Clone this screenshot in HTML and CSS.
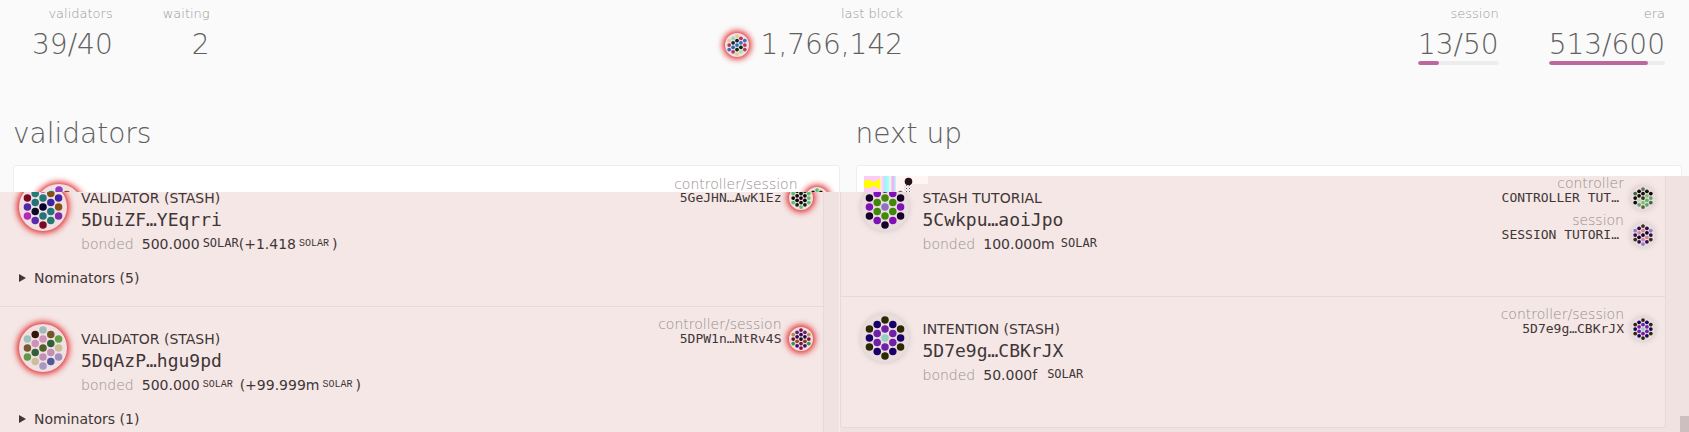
FILE: index.html
```html
<!DOCTYPE html>
<html lang="en">
<head>
<meta charset="utf-8">
<title>Staking overview</title>
<link rel="stylesheet" href="styles.css">
</head>
<body>
<header class="summary">
  <div class="group">
    <div class="stat"><span class="label">validators</span><span class="value">39/40</span></div>
    <div class="stat"><span class="label">waiting</span><span class="value">2</span></div>
  </div>
  <div class="stat">
    <span class="label">last block</span>
    <span class="value"><svg class="ident small hot" data-set="block"></svg>1,766,142</span>
  </div>
  <div class="group">
    <div class="stat"><span class="label">session</span><span class="value">13/50</span><div class="bar"><div class="fill" style="width:26%"></div></div></div>
    <div class="stat"><span class="label">era</span><span class="value">513/600</span><div class="bar"><div class="fill" style="width:85%"></div></div></div>
  </div>
</header>

<main>
  <div class="headings"><h1>validators</h1><h1>next up</h1></div>

  <div class="backdrop">
    <div class="card">
      <div class="row">
        <svg class="ident hot" data-set="dui"></svg>
        <div class="info"></div>
        <div class="keys"><div class="key"><div class="key-label">controller/session</div><svg class="ident small hot" data-set="ge"></svg></div></div>
      </div>
    </div>
    <div class="card"></div>
  </div>

  <div class="lists">
    <section class="column column-left">
      <div class="card">
        <article class="entry">
          <div class="row">
            <svg class="ident hot" data-set="dui"></svg>
            <div class="info">
              <div class="name">VALIDATOR (STASH)</div>
              <div class="address">5DuiZF…YEqrri</div>
              <div class="bonded"><span class="dim">bonded</span><span class="amount">500.000</span><span class="unit tight">SOLAR</span><span>(+1.418</span><span class="unit tiny">SOLAR</span><span>)</span></div>
            </div>
            <div class="keys"><div class="key"><div class="key-value">5GeJHN…AwK1Ez</div><svg class="ident small hot" data-set="ge"></svg></div></div>
          </div>
          <details><summary>Nominators (5)</summary></details>
        </article>
        <article class="entry">
          <div class="row">
            <svg class="ident hot" data-set="dqa"></svg>
            <div class="info">
              <div class="name">VALIDATOR (STASH)</div>
              <div class="address">5DqAzP…hgu9pd</div>
              <div class="bonded"><span class="dim">bonded</span><span class="amount">500.000</span><span class="unit tiny">SOLAR</span><span class="reward">(+99.999m</span><span class="unit tiny">SOLAR</span><span>)</span></div>
            </div>
            <div class="keys"><div class="key"><div class="key-label">controller/session</div><div class="key-value">5DPW1n…NtRv4S</div><svg class="ident small hot" data-set="dpw"></svg></div></div>
          </div>
          <details><summary>Nominators (1)</summary></details>
        </article>
      </div>
    </section>

    <section class="column column-right">
      <div class="card">
        <article class="entry">
          <div class="row">
            <svg class="ident" data-set="cwk"></svg>
            <div class="info">
              <div class="name">STASH TUTORIAL</div>
              <div class="address">5Cwkpu…aoiJpo</div>
              <div class="bonded"><span class="dim">bonded</span><span class="amount">100.000m</span><span class="unit">SOLAR</span></div>
            </div>
            <div class="keys">
              <div class="key"><div class="key-label">controller</div><div class="key-value short">CONTROLLER TUT…</div><svg class="ident small" data-set="ctl"></svg></div>
              <div class="key"><div class="key-label">session</div><div class="key-value short">SESSION TUTORI…</div><svg class="ident small" data-set="ses"></svg></div>
            </div>
          </div>
        </article>
        <article class="entry">
          <div class="row">
            <svg class="ident" data-set="d7e"></svg>
            <div class="info">
              <div class="name">INTENTION (STASH)</div>
              <div class="address">5D7e9g…CBKrJX</div>
              <div class="bonded"><span class="dim">bonded</span><span class="amount">50.000f</span><span class="unit wide">SOLAR</span></div>
            </div>
            <div class="keys"><div class="key"><div class="key-label">controller/session</div><div class="key-value">5D7e9g…CBKrJX</div><svg class="ident small" data-set="d7e"></svg></div></div>
          </div>
        </article>
      </div>
    </section>

    <svg class="noise" viewBox="0 0 64 16" aria-hidden="true">
      <defs>
        <linearGradient id="streaks"><stop offset="0" stop-color="#fff6c8"/><stop offset=".2" stop-color="#ffc8ff"/><stop offset=".3" stop-color="#9ff4f4"/><stop offset=".5" stop-color="#a0ffff"/><stop offset=".65" stop-color="#fff0d8"/><stop offset=".8" stop-color="#e8a8ff"/><stop offset="1" stop-color="#b8fff0"/></linearGradient>
        <pattern id="specks" width="3" height="3" patternUnits="userSpaceOnUse"><rect width="1" height="1" fill="#6a5a5a"/><rect x="1.500" y="1.500" width="1" height="1" fill="#a89898"/></pattern>
      </defs>
      <path fill="#fff5f5" d="M32 0h32v8H48v8H32z"/>
      <path fill="#fccbfa" d="M0 0h16v16H0z"/>
      <path fill="url(#streaks)" d="M16 0h16v16H16z"/>
      <path fill="#ff0" d="M0 5q5-3 9 1l7-3v10l-7-3q-4 4-9 1z"/>
      <circle cx="44.500" cy="5.500" r="3.800" fill="#26101a"/>
      <path fill="url(#specks)" d="M40 9h8v7h-8z"/>
      <path fill="#806a60" d="M34 16q2-3 5 0z"/>
    </svg>
  </div>
</main>
<div class="thumb"></div>
<script src="app.js"></script>
</body>
</html>
```
FILE: styles.css
```css
* { box-sizing: border-box; }
html, body { height: 100%; margin: 0; overflow: hidden; }
body {
  display: flex;
  flex-direction: column;
  background: #fafafa;
  color: #403636;
  font: 14px/20px "DejaVu Sans", sans-serif;
}
main { flex: 1; min-height: 0; overflow: hidden; }

.summary {
  display: flex;
  flex: none;
  justify-content: space-between;
  padding: 4px 24px 39px 32px;
}
.group { display: flex; gap: 50px; }
.stat { display: flex; flex-direction: column; align-items: flex-end; }
.label { color: #999; font-size: 13px; font-weight: 200; line-height: 20px; }
.value {
  display: flex;
  align-items: center;
  gap: 12px;
  padding-top: 4px;
  color: #606060;
  font-size: 28px;
  font-weight: 200;
  line-height: 33px;
}
.bar { width: 100%; height: 4px; border-radius: 2px; background: #ededed; overflow: hidden; }
.fill { height: 100%; border-radius: 2px; background: #bd679b; }

.headings, .backdrop {
  display: grid;
  grid-template-columns: 1fr 1fr;
  gap: 16px;
  padding: 0 7px 0 13px;
}
h1 {
  height: 61px;
  margin: 0;
  color: #606060;
  font-size: 28px;
  font-weight: 200;
  line-height: 60px;
}

.backdrop { height: 27px; overflow: hidden; }
.backdrop .card { background: #fff; border: 1px solid #eee; border-radius: 3px 3px 0 0; }
.backdrop .row { padding-left: 21px; }

.lists {
  position: relative;
  display: grid;
  grid-template-columns: calc(50% - 5px) 1fr;
  align-items: start;
  margin-top: -27px;
}
.column { background: #efe2e1; min-height: 300px; }
.column-left { padding-right: 16px; clip-path: inset(27px 0 0 0); }
.column-right {
  padding-right: 23px;
  clip-path: polygon(0 27px, 72px 27px, 72px 19px, 88px 19px, 88px 11px, 100% 11px, 100% 100%, 0 100%);
}
.lists .card { background: #f4e7e6; border-right: 1px solid #e6d9d8; }
.column-right .card { border: solid #e6d9d8; border-width: 0 1px 1px; border-radius: 0 0 3px 3px; }
.entry + .entry { box-shadow: inset 0 1px #e6d9d8; }
.column-left .entry { height: 141px; }
.column-right .entry { height: 131px; }

.row { display: flex; align-items: flex-start; gap: 14px; padding: 0 10px 0 19px; }
.column-right .row { padding-left: 20px; }
.info { flex: 1; padding-top: 23px; }
.name { line-height: 20px; }
.address { font: 18px/24px "DejaVu Sans Mono", monospace; }
.bonded { display: flex; line-height: 24px; }
.dim { color: #978e8e; font-weight: 200; }
.amount { margin-left: 8px; }
.unit { margin-left: 6px; font: 12px/22px "DejaVu Sans Mono", monospace; }
.unit.tight { margin-left: 3px; }
.unit.wide { margin-left: 10px; }
.unit.tiny { margin: 0 3px; font: 10px/23px "Liberation Mono", monospace; }
.reward { margin-left: 4px; }

.keys { display: flex; flex-direction: column; gap: 7px; padding-top: 11px; }
.key {
  display: grid;
  grid-template-columns: 1fr 24px;
  grid-template-rows: 14px 16px;
  column-gap: 7px;
  text-align: right;
}
.key-label { grid-area: 1 / 1; color: #978e8e; font-weight: 200; line-height: 14px; }
.key-value { grid-area: 2 / 1; font: 13px/16px "DejaVu Sans Mono", monospace; }
.key-value.short { padding-right: 5px; }
.key .ident { grid-area: 1 / 2 / 3 / 3; margin-top: 10px; }

.ident {
  flex: none;
  width: 48px;
  height: 48px;
  margin-top: 18px;
  border-radius: 50%;
  background: #e9dddd;
  box-shadow: 0 0 5px 1px #d8cccc;
}
.ident.small { width: 24px; height: 24px; }
.ident.hot { background: #f1e0e3; box-shadow: 0 0 6px 2px #e02222; }
.value .ident { margin-top: 0; }

details { padding: 12px 0 0 19px; }
summary { display: flex; align-items: center; gap: 8px; line-height: 20px; list-style: none; }
summary::before {
  content: "";
  border: solid transparent;
  border-width: 4px 0 4px 7px;
  border-left-color: #403636;
}

.noise { position: absolute; left: calc(50% + 19px); top: 11px; width: 64px; height: 16px; }
.thumb { position: fixed; right: 0; bottom: 0; width: 9px; height: 16px; background: #cdbfbf; }
```
FILE: app.js
```js
// Dot centres as offsets from the middle of a 64-unit box.
const A = 20.78, B = 10.39;
const dots = [
  [0, -24], [0, -12], [-B, -18], [-A, -12], [-B, -6], [-A, 0], [-B, 6], [-A, 12], [-B, 18],
  [0, 12], [0, 24], [B, 18], [A, 12], [B, 6], [A, 0], [B, -6], [A, -12], [B, -18], [0, 0]
];
const ring = (corner, edge, inner, centre) => [
  corner, inner, edge, corner, inner, edge, inner, corner, edge,
  inner, corner, edge, corner, inner, edge, inner, corner, edge, centre
].join(' ');
const sets = {
  dui: '#8f3cc4 #237b78 #257b78 #7a0a22 #237478 #5028a8 #0c0c20 #b42ab4 #5a2aa8 #237478 #7a0a22 #237b70 #8028a8 #237478 #854f18 #3a28a0 #4522a0 #854f18 #04002a',
  dqa: '#a0bcb8 #d092b8 #301808 #a0c0bc #d090b8 #755830 #306038 #609a48 #c8c098 #c090b8 #a898c4 #50589a #a090c0 #c090b8 #c8c098 #306038 #60a040 #705828 #506028',
  cwk: ring('#150028', '#8010b8', '#408808', '#8f70c8'),
  d7e: ring('#2c2800', '#180068', '#7020a8', '#98d0c0'),
  ge: '#58c068 #102010 #102010 #58c068 #100808 #140810 #100808 #58c068 #102010 #140810 #58c068 #102010 #58c068 #100808 #58c068 #140810 #58c068 #102010 #140810',
  dpw: '#70103c #301058 #6a1a80 #b09040 #380858 #7a1028 #a04828 #40903c #301080 #7a1830 #8a1030 #381080 #409040 #804028 #8a1028 #280848 #b09848 #702080 #180818',
  block: '#e8c898 #082820 #90dcb0 #e8c898 #182838 #b03858 #2868b0 #4068c0 #b03858 #102818 #e8c898 #90f0a0 #b83858 #102818 #b03858 #3868c0 #4068c0 #b03858 #2078b8',
  ctl: '#587848 #181010 #100808 #406038 #100c0c #100808 #c0d898 #100808 #60a078 #80c070 #506838 #58a868 #506838 #70b068 #60a078 #80c070 #100808 #181010 #283820',
  ses: '#383010 #d08898 #300858 #9080c0 #d08898 #300858 #180028 #383010 #300858 #d08898 #9080c0 #300858 #383010 #d08898 #300858 #180028 #9080c0 #300858 #180028'
};
document.querySelectorAll('.ident').forEach(svg => {
  svg.setAttribute('viewBox', '0 0 64 64');
  svg.innerHTML = sets[svg.dataset.set].split(' ').map((fill, i) =>
    `<circle cx="${32 + dots[i][0]}" cy="${32 + dots[i][1]}" r="5" fill="${fill}"/>`).join('');
});
```
